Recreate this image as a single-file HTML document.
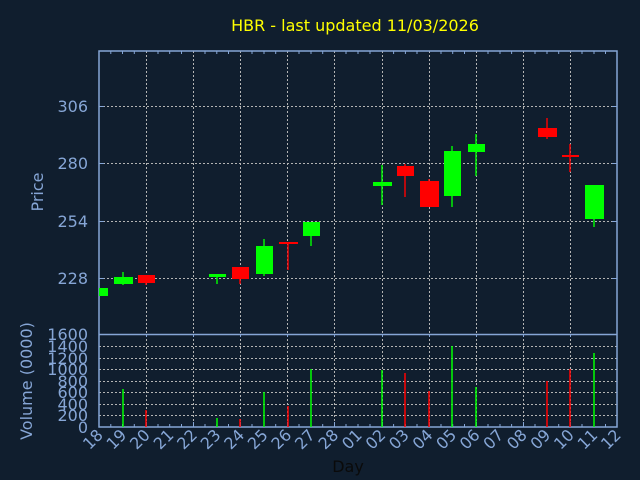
<!DOCTYPE html>
<html><head><style>html,body{margin:0;padding:0;background:#101e2e;}svg{display:block}</style></head><body>
<svg width="640" height="480" xmlns="http://www.w3.org/2000/svg" font-family="'DejaVu Sans', 'Liberation Sans', sans-serif">
<rect width="640" height="480" fill="#101e2e"/>
<text x="355" y="31" fill="#ffff00" font-size="16" text-anchor="middle">HBR - last updated 11/03/2026</text>
<g stroke="#b4b4b4" stroke-dasharray="2,2" stroke-width="1">
<line x1="99" x2="617" y1="106.5" y2="106.5"/><line x1="99" x2="617" y1="163.5" y2="163.5"/><line x1="99" x2="617" y1="221.5" y2="221.5"/><line x1="99" x2="617" y1="278.5" y2="278.5"/>
<line x1="99" x2="617" y1="346.5" y2="346.5"/><line x1="99" x2="617" y1="358.5" y2="358.5"/><line x1="99" x2="617" y1="369.5" y2="369.5"/><line x1="99" x2="617" y1="381.5" y2="381.5"/><line x1="99" x2="617" y1="392.5" y2="392.5"/><line x1="99" x2="617" y1="404.5" y2="404.5"/><line x1="99" x2="617" y1="415.5" y2="415.5"/>
<g id="vg">
<line x1="146.5" x2="146.5" y1="51" y2="427"/><line x1="193.5" x2="193.5" y1="51" y2="427"/><line x1="240.5" x2="240.5" y1="51" y2="427"/><line x1="287.5" x2="287.5" y1="51" y2="427"/><line x1="334.5" x2="334.5" y1="51" y2="427"/><line x1="382.5" x2="382.5" y1="51" y2="427"/><line x1="429.5" x2="429.5" y1="51" y2="427"/><line x1="476.5" x2="476.5" y1="51" y2="427"/><line x1="523.5" x2="523.5" y1="51" y2="427"/><line x1="570.5" x2="570.5" y1="51" y2="427"/>
</g></g>
<g fill="none" stroke="#86a6d6" stroke-width="1.5">
<rect x="99" y="51" width="518" height="376"/>
<line x1="99" x2="617" y1="334.5" y2="334.5"/>
</g>
<g stroke="#86a6d6" stroke-width="1">
<path d="M110.8 51v3M122.5 51v3M134.3 51v3M158 51v3M169.7 51v3M181.5 51v3M205 51v3M216.8 51v3M228.5 51v3M252 51v3M264 51v3M275.7 51v3M299 51v3M311 51v3M322.7 51v3M346 51v3M358 51v3M370 51v3M393.6 51v3M405.4 51v3M417 51v3M441 51v3M452.7 51v3M464.5 51v3M488 51v3M500 51v3M511.6 51v3M535 51v3M547 51v3M558.7 51v3M582 51v3M594 51v3M605.5 51v3"/>
<path d="M110.8 427v-3M122.5 427v-3M134.3 427v-3M158 427v-3M169.7 427v-3M181.5 427v-3M205 427v-3M216.8 427v-3M228.5 427v-3M252 427v-3M264 427v-3M275.7 427v-3M299 427v-3M311 427v-3M322.7 427v-3M346 427v-3M358 427v-3M370 427v-3M393.6 427v-3M405.4 427v-3M417 427v-3M441 427v-3M452.7 427v-3M464.5 427v-3M488 427v-3M500 427v-3M511.6 427v-3M535 427v-3M547 427v-3M558.7 427v-3M582 427v-3M594 427v-3M605.5 427v-3"/>
<path d="M146.5 334v3M193.5 334v3M240.5 334v3M287.5 334v3M334.5 334v3M382.5 334v3M429.5 334v3M476.5 334v3M523.5 334v3M570.5 334v3M146.5 427v-5M193.5 427v-5M240.5 427v-5M287.5 427v-5M334.5 427v-5M382.5 427v-5M429.5 427v-5M476.5 427v-5M523.5 427v-5M570.5 427v-5"/>
<path d="M99 106.5h5M99 163.5h5M99 221.5h5M99 278.5h5M617 106.5h-5M617 163.5h-5M617 221.5h-5M617 278.5h-5"/>
</g>
<g fill="#86a6d6" font-size="16" text-anchor="end">
<text x="88" y="112">306</text><text x="88" y="169">280</text><text x="88" y="227">254</text><text x="88" y="284">228</text>
<text x="88" y="340">1600</text><text x="88" y="352">1400</text><text x="88" y="364">1200</text><text x="88" y="375">1000</text><text x="88" y="387">800</text><text x="88" y="398">600</text><text x="88" y="410">400</text><text x="88" y="421">200</text><text x="88" y="433">0</text>
</g>
<text transform="translate(43,192) rotate(-90)" fill="#86a6d6" font-size="16" text-anchor="middle">Price</text>
<text transform="translate(32,381) rotate(-90)" fill="#86a6d6" font-size="16" text-anchor="middle">Volume (0000)</text>
<g fill="#86a6d6" font-size="16" text-anchor="end">
<text transform="translate(104,436) rotate(-45)">18</text>
<text transform="translate(127.5,436) rotate(-45)">19</text>
<text transform="translate(151,436) rotate(-45)">20</text>
<text transform="translate(174.7,436) rotate(-45)">21</text>
<text transform="translate(198.2,436) rotate(-45)">22</text>
<text transform="translate(221.7,436) rotate(-45)">23</text>
<text transform="translate(245.3,436) rotate(-45)">24</text>
<text transform="translate(268.8,436) rotate(-45)">25</text>
<text transform="translate(292.4,436) rotate(-45)">26</text>
<text transform="translate(316,436) rotate(-45)">27</text>
<text transform="translate(339.5,436) rotate(-45)">28</text>
<text transform="translate(363,436) rotate(-45)">01</text>
<text transform="translate(386.6,436) rotate(-45)">02</text>
<text transform="translate(410,436) rotate(-45)">03</text>
<text transform="translate(433.7,436) rotate(-45)">04</text>
<text transform="translate(457.3,436) rotate(-45)">05</text>
<text transform="translate(480.8,436) rotate(-45)">06</text>
<text transform="translate(504.4,436) rotate(-45)">07</text>
<text transform="translate(528,436) rotate(-45)">08</text>
<text transform="translate(551.5,436) rotate(-45)">09</text>
<text transform="translate(575,436) rotate(-45)">10</text>
<text transform="translate(598.6,436) rotate(-45)">11</text>
<text transform="translate(622,436) rotate(-45)">12</text>
</g>
<text x="348" y="472" fill="#0a0a0a" font-size="16" text-anchor="middle">Day</text>
<!-- candles -->
<g stroke-width="1.5">
<g fill="#00ff00" stroke="none">
<rect x="99" y="288" width="9" height="8"/>
<rect x="114" y="277" width="19" height="7"/><rect x="122.3" y="272" width="1.4" height="13"/>
<rect x="209" y="274" width="17" height="3"/><rect x="216.3" y="274" width="1.4" height="10"/>
<rect x="256" y="246" width="17" height="28"/><rect x="263.3" y="239" width="1.4" height="37"/>
<rect x="303" y="222" width="17" height="14"/><rect x="310.3" y="236" width="1.4" height="10"/>
<rect x="373" y="182" width="19" height="4"/><rect x="381.3" y="165" width="1.4" height="40"/>
<rect x="444" y="151" width="17" height="45"/><rect x="451.3" y="146" width="1.4" height="61"/>
<rect x="468" y="144" width="17" height="8"/><rect x="475.3" y="134" width="1.4" height="42"/>
<rect x="585" y="185" width="19" height="34"/><rect x="593.3" y="219" width="1.4" height="8"/>
</g>
<g fill="#ff0000" stroke="none">
<rect x="138" y="275" width="17" height="8"/><rect x="145.3" y="275" width="1.4" height="10"/>
<rect x="232" y="267" width="17" height="12"/><rect x="239.3" y="267" width="1.4" height="17"/>
<rect x="279" y="242" width="19" height="2"/><rect x="287.3" y="242" width="1.4" height="28"/>
<rect x="397" y="166" width="17" height="10"/><rect x="404.3" y="164" width="1.4" height="33"/>
<rect x="420" y="181" width="19" height="26"/><rect x="428.3" y="179" width="1.4" height="5"/>
<rect x="538" y="128" width="19" height="9"/><rect x="546.3" y="118" width="1.4" height="21"/>
<rect x="562" y="155" width="17" height="2"/><rect x="569.3" y="144" width="1.4" height="28"/>
</g>
</g>
<!-- volume -->
<g stroke-width="1.5">
<path stroke="#00ff00" d="M123 427V389M217 427V418M264 427V392M311 427V369M382 427V370M452 427V346M476 427V387M594 427V353"/>
<path stroke="#ff0000" d="M146 427V410M240 427V419M288 427V406M405 427V373M429 427V391M547 427V381M570 427V369"/>
</g>
</svg>
</body></html>
